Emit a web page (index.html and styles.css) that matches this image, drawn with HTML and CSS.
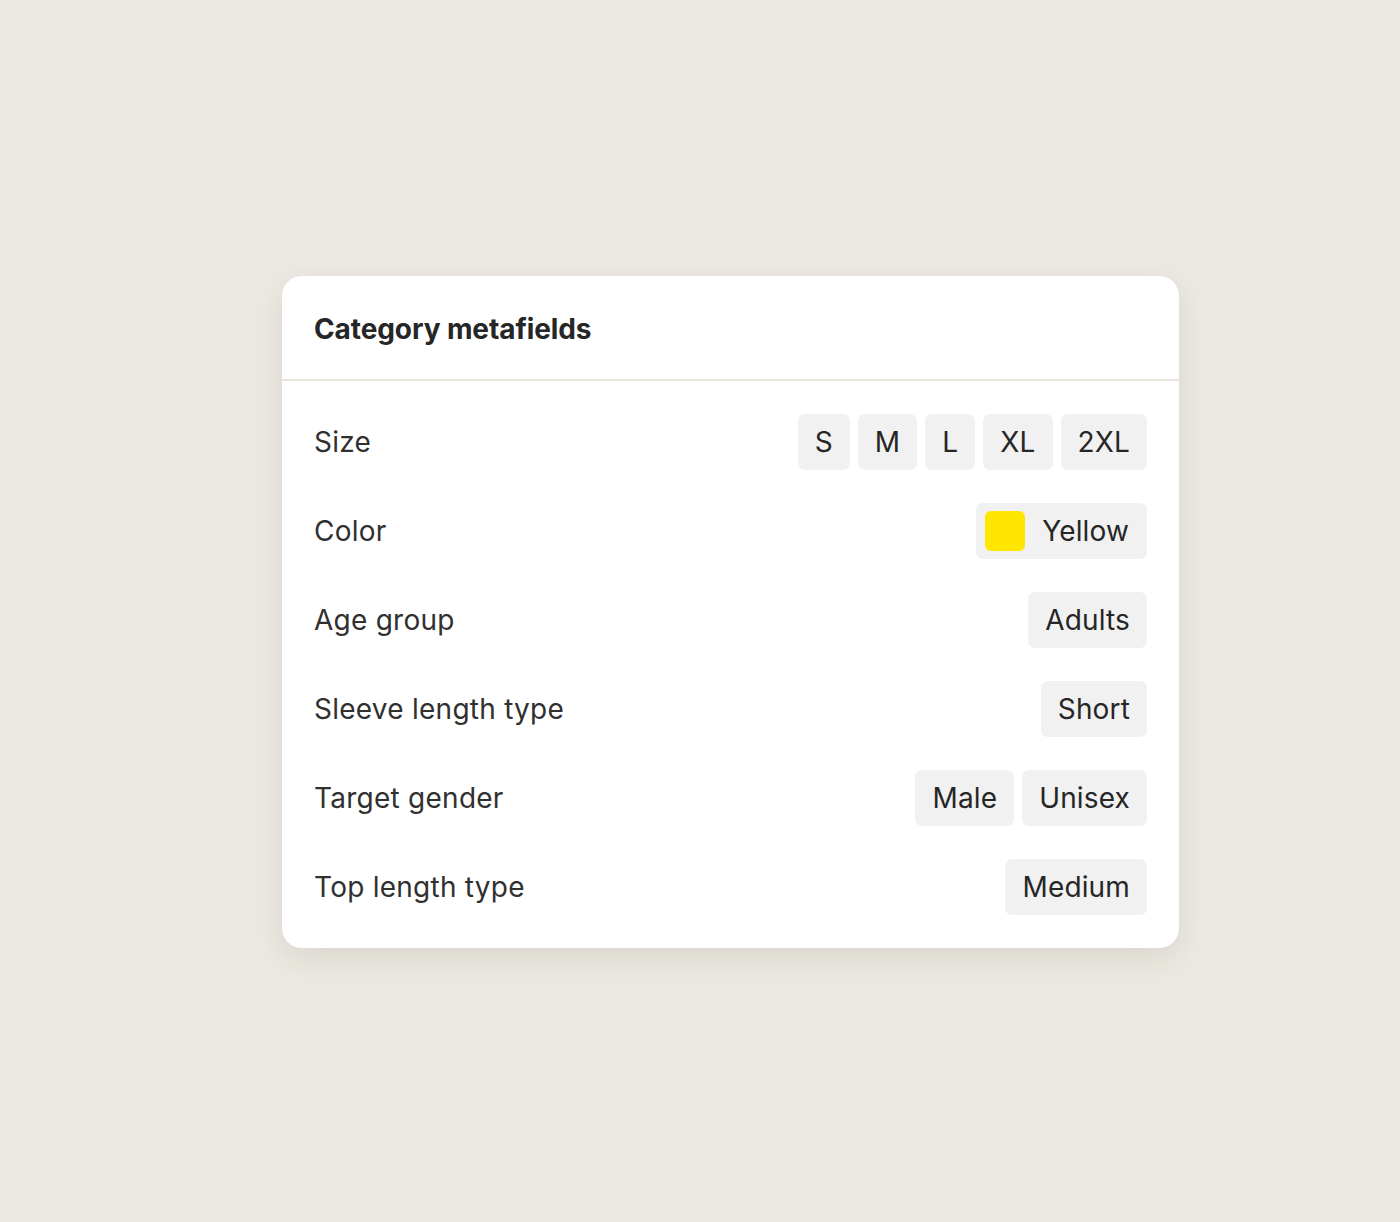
FILE: index.html
```html
<!DOCTYPE html>
<html lang="en">
<head>
  <meta charset="UTF-8">
  <title>Category metafields</title>
  <link rel="stylesheet" href="styles.css">
</head>
<body>
  <div class="page">
    <!-- metafields card -->
    <div class="card">
      <div class="card-header">
        <h2>Category metafields</h2>
      </div>
      <div class="card-body">
        <div class="row">
          <span class="label">Size</span>
          <div class="chips">
            <span class="chip">S</span>
            <span class="chip">M</span>
            <span class="chip">L</span>
            <span class="chip">XL</span>
            <span class="chip">2XL</span>
          </div>
        </div>
        <div class="row">
          <span class="label">Color</span>
          <div class="chips">
            <span class="chip chip-color"><span class="swatch"></span>Yellow</span>
          </div>
        </div>
        <div class="row">
          <span class="label">Age group</span>
          <div class="chips">
            <span class="chip">Adults</span>
          </div>
        </div>
        <div class="row">
          <span class="label">Sleeve length type</span>
          <div class="chips">
            <span class="chip">Short</span>
          </div>
        </div>
        <div class="row">
          <span class="label">Target gender</span>
          <div class="chips">
            <span class="chip">Male</span>
            <span class="chip">Unisex</span>
          </div>
        </div>
        <div class="row">
          <span class="label">Top length type</span>
          <div class="chips">
            <span class="chip">Medium</span>
          </div>
        </div>
      </div>
    </div>
  </div>
</body>
</html>
```

FILE: styles.css
```css
/* page */
body {
  margin: 0;
  padding: 0;
  background-color: #ece9e2;
  font-family: Inter, "Noto Sans", sans-serif;
  color: #303030;
}

.page {
  padding: 276px 0 0 282px;
  min-height: 1222px;
  box-sizing: border-box;
}

/* card */
.card {
  width: 897px;
  background: #ffffff;
  border-radius: 20px;
  box-shadow: 0 10px 30px rgba(60, 50, 30, 0.10);
}

.card-header {
  height: 105px;
  display: flex;
  align-items: center;
  padding: 2px 32px 0 32px;
  border-bottom: 2px solid #e8e5dc;
  box-sizing: border-box;
}

.card-header h2 {
  margin: 0;
  font-size: 28px;
  font-weight: 700;
  color: #262626;
  letter-spacing: -0.1px;
}

.card-body {
  display: flex;
  flex-direction: column;
  gap: 33px;
  padding: 33px 32px 33px 32px;
}

/* rows */
.row {
  display: flex;
  align-items: center;
  justify-content: space-between;
  height: 56px;
}

.label {
  font-size: 28px;
  color: #303030;
  letter-spacing: 0.25px;
}

.chips {
  display: flex;
  gap: 8px;
}

.chip {
  display: flex;
  align-items: center;
  height: 56px;
  padding: 0 17px;
  background: #f1f1f1;
  border-radius: 7px;
  font-size: 28px;
  color: #262626;
  letter-spacing: 0.15px;
  box-sizing: border-box;
}

.chip-color {
  padding-left: 9px;
  padding-right: 18px;
  gap: 17px;
}

.swatch {
  width: 40px;
  height: 40px;
  border-radius: 6px;
  background: #ffe600;
}
```
